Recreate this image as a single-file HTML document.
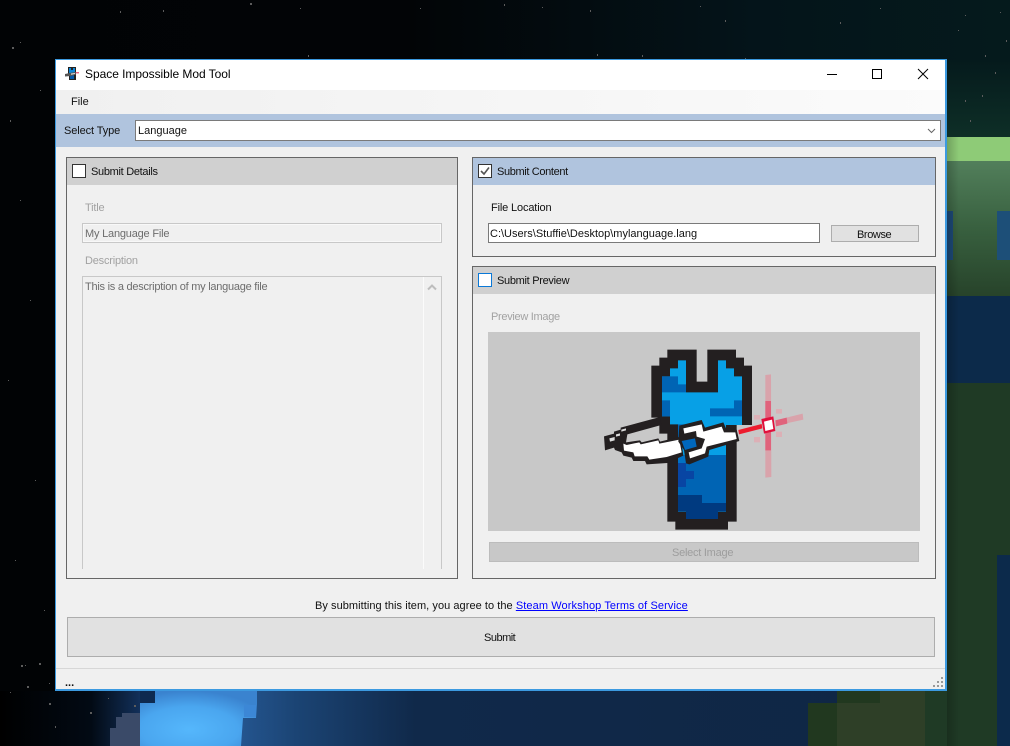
<!DOCTYPE html>
<html><head><meta charset="utf-8"><style>
html,body{margin:0;padding:0;width:1010px;height:746px;overflow:hidden;background:#000}
div,a,span{position:absolute;box-sizing:border-box}
.t{font:11px/14px "Liberation Sans",sans-serif;color:#111;white-space:nowrap}
.g{color:#a2a2a2}
.cb{width:14px;height:14px;background:#fff;border:1px solid #333}
.panel{border:1px solid #666;background:#f0f0f0}
.hd{left:0;top:0;right:0;height:27px;background:#d0d0d0}
.btn{background:#e1e1e1;border:1px solid #adadad}
svg{position:absolute;left:0;top:0}
</style></head><body>
<svg width="1010" height="746" viewBox="0 0 1010 746">
<defs>
<linearGradient id="top" x1="0" x2="1" y1="0" y2="0"><stop offset="0" stop-color="#010305"/><stop offset=".4" stop-color="#020406"/><stop offset=".75" stop-color="#04141a"/><stop offset="1" stop-color="#051a1c"/></linearGradient>
<linearGradient id="r0" x1="0" x2="0" y1="0" y2="1"><stop offset="0" stop-color="#051a1c"/><stop offset="1" stop-color="#0e2f27"/></linearGradient>
<linearGradient id="r1" x1="0" x2="0" y1="0" y2="1"><stop offset="0" stop-color="#527f5b"/><stop offset=".5" stop-color="#38603f"/><stop offset="1" stop-color="#27432a"/></linearGradient>
<linearGradient id="nav" x1="0" x2="1" y1="0" y2="0"><stop offset="0" stop-color="#24558f"/><stop offset=".08" stop-color="#1b4474"/><stop offset=".25" stop-color="#10294a"/><stop offset="1" stop-color="#0f2644"/></linearGradient>
<radialGradient id="lb" cx=".42" cy=".7" r=".7"><stop offset="0" stop-color="#55b7fc"/><stop offset=".6" stop-color="#4aa6ef"/><stop offset="1" stop-color="#3a83cf"/></radialGradient>
<linearGradient id="lft" x1="0" x2="1" y1="0" y2="0"><stop offset="0" stop-color="#000"/><stop offset=".65" stop-color="#020a14"/><stop offset="1" stop-color="#12305a"/></linearGradient>
<linearGradient id="sh" x1="0" x2="1" y1="0" y2="0"><stop offset="0" stop-color="#000" stop-opacity=".2"/><stop offset="1" stop-color="#000" stop-opacity="0"/></linearGradient>
<symbol id="sp" viewBox="0 0 690 600">
<path fill="#d9a3ab" d="M526 120l17-2 1 308-18 2zM556 256l82-20 2 18-82 18z"/>
<path fill="#e0637c" d="M526 198h17v148h-17zM556 256l34-8 2 18-34 8z"/>
<path fill="#dcb0b6" d="M492 240h18v14h-18zM558 222h18v14h-18zM492 306h18v16h-18zM558 290h18v16h-18z"/>
<path fill="#231f20" d="M232 44H320V140H352V44H438V68H462V92H486V270H440V560H414V584H256V560H232V296H208V248H184V92H208V68H232Z"/>
<path fill="#07a0e6" d="M216 124H240V100H264V76H288V172H384V76H408V100H432V124H456V270H408V530H264V268H240V244H216Z"/>
<path fill="#0064b4" d="M216 124H264V148H288V172H216ZM216 196H240V244H216ZM432 196H456V244H360V220H432ZM264 268H300V320H264ZM264 360H408V530H264Z"/>
<path fill="#0071c4" d="M264 360H288V384H264Z"/>
<path fill="#0845a3" d="M264 384H288V408H312V432H288V456H264Z"/>
<path fill="#003a80" d="M264 480H336V504H408V528H384V552H288V528H264Z"/>
<path fill="#231f20" d="M42 304L72 296V290L92 284V278L210 246L214 270L112 298L108 322L150 316L155 322L205 310L210 320L272 305L280 362L232 384L170 388L165 378L130 378L125 368L100 362L95 352L75 345L72 338L45 346Z"/>
<path fill="#fff" d="M100 326L110 330L148 322L152 328L205 316L208 326L268 314L275 352L230 366L178 374L172 364L134 364L130 352L102 347Z"/>
<path fill="#ddd" d="M58 310L74 306V316L60 320ZM78 298L90 295V302L78 305ZM94 284L108 280V286L94 290Z"/>
<path fill="#231f20" d="M268 272L335 255L345 278L400 262L408 280L440 284L448 318L358 345L355 365L298 388L288 385L282 345L265 320Z"/>
<path fill="#fff" d="M280 280L335 268L340 290L395 275L402 292L436 292L440 312L350 335L345 355L300 370L296 352L335 340L345 312L320 305L318 288L283 296Z"/>
<path fill="#0067bc" d="M275 318L315 310L320 335L285 345Z"/>
<path fill="#ed1c2e" d="M445 285L515 267L517 280L447 298Z"/>
<path fill="#e0103c" d="M514 252L550 244L556 288L522 296Z"/>
<path fill="#fff" d="M522 260L546 254L550 282L526 288Z"/>
</symbol>
</defs>
<rect width="1010" height="746" fill="url(#top)"/>
<rect x="947" y="60" width="63" height="78" fill="url(#r0)"/>
<rect x="947" y="137" width="63" height="27" fill="#8ecb77"/>
<rect x="947" y="161" width="63" height="135" fill="url(#r1)"/>
<rect x="947" y="211" width="6" height="49" fill="#1d4a78"/>
<rect x="997" y="211" width="13" height="49" fill="#1d4f78"/>
<rect x="947" y="296" width="63" height="87" fill="#0c2a4a"/>
<rect x="947" y="383" width="63" height="363" fill="#1f3a25"/>
<rect x="997" y="555" width="13" height="191" fill="#0c2a4b"/>
<rect x="0" y="691" width="140" height="55" fill="url(#lft)"/>
<path fill="#3a4a68" d="M110 746V728H116V717H122V713H140V746Z"/>
<rect x="140" y="691" width="15" height="12" fill="#0e2a50"/>
<rect x="240" y="691" width="700" height="55" fill="url(#nav)"/>
<path fill="url(#lb)" d="M155 691H257V704L256 718H243L241 746H140V703H155Z"/>
<path fill="#3c87d6" d="M244 705H256V717H244Z"/>
<rect x="808" y="703" width="202" height="43" fill="#21381f"/>
<rect x="837" y="691" width="130" height="12" fill="#21381f"/>
<rect x="880" y="691" width="45" height="12" fill="#2e3f27"/>
<rect x="837" y="703" width="88" height="43" fill="#2e3f27"/>
<rect x="925" y="691" width="85" height="55" fill="#1f3a25"/>
<rect x="997" y="691" width="13" height="55" fill="#0c2a4b"/>
<rect x="947" y="137" width="12" height="609" fill="url(#sh)"/>
<path fill="#5c5c5c" d="M12 47h2v2h-2zM120 11h1v2h-1zM163 10h1v2h-1zM250 3h2v2h-2zM172 63h1v2h-1zM308 55h1v2h-1zM300 8h1v1h-1zM332 66h1v1h-1zM420 8h1v1h-1zM504 4h1v2h-1zM542 7h1v1h-1zM590 10h1v2h-1zM597 54h1v2h-1zM642 55h1v2h-1zM745 58h1v2h-1zM725 20h1v2h-1zM840 22h1v2h-1zM880 8h1v1h-1zM930 85h1v1h-1zM965 15h1v1h-1zM985 55h1v2h-1zM965 100h1v2h-1zM982 95h1v2h-1zM995 72h1v2h-1zM970 120h1v2h-1zM20 42h1v1h-1zM10 120h1v2h-1zM30 300h1v1h-1zM20 200h1v1h-1zM40 90h1v1h-1zM8 380h1v1h-1zM35 480h1v1h-1zM15 560h1v1h-1zM44 610h1v1h-1zM25 665h1v1h-1zM10 692h1v1h-1zM21 665h2v2h-2zM39 663h2v2h-2zM27 686h2v2h-2zM49 703h2v2h-2zM89 688h1v2h-1zM134 705h2v2h-2zM90 712h2v2h-2zM55 726h1v2h-1zM49 683h1v1h-1zM108 698h1v1h-1zM112 683h1v1h-1zM1000 12h1v1h-1zM958 30h1v1h-1zM700 6h1v1h-1zM1006 40h1v2h-1z"/>
</svg>

<div style="left:55px;top:59px;width:892px;height:632px;background:#f0f0f0;border:1px solid #3c9ae0;border-width:1px 2px 2px 1px"></div>
<div style="left:56px;top:60px;width:889px;height:30px;background:#fff"></div>
<svg style="left:64px;top:66px" width="16" height="16" viewBox="0 0 16 16">
<path fill="#222" d="M4 1H12V14H5V10H4Z"/>
<path fill="#0a86d8" d="M5 2H7V4H9V2H11V7H10V13H6V7H5Z"/>
<path fill="#0458a8" d="M6 9H10V13H6Z"/>
<path fill="#555" d="M1 8L8 6.500L12 6V8.500L7 10L1 10.500Z"/>
<path fill="#ddd" d="M7 7.500L11 7V8L7 8.800Z"/>
<path fill="#e8204a" d="M12 6.300H15V7.300H12Z"/>
</svg>
<div class="t" style="left:85px;top:67px;font-size:12px;color:#000;letter-spacing:-.04px">Space Impossible Mod Tool</div>
<svg style="left:820px;top:62px" width="120" height="24" viewBox="820 62 120 24"><path d="M827 74.500h10" stroke="#000" stroke-width="1"/><rect x="872.500" y="69.500" width="9" height="9" fill="none" stroke="#000"/><path d="M918 69l10 10M928 69l-10 10" stroke="#000" stroke-width="1"/></svg>

<div style="left:56px;top:90px;width:889px;height:24px;background:linear-gradient(90deg,#f0f0f0,#fbfbfb)"></div>
<div class="t" style="left:71px;top:95px;color:#111">File</div>

<div style="left:56px;top:114px;width:889px;height:33px;background:#b0c4de"></div>
<div class="t" style="left:64px;top:124px;letter-spacing:-.1px">Select Type</div>
<div style="left:135px;top:120px;width:806px;height:21px;background:#fff;border:1px solid #7a7a7a"></div>
<div class="t" style="left:138px;top:124px">Language</div>
<svg style="left:925px;top:126px" width="12" height="8"><path d="M3 3l3.500 3.500L10 3" fill="none" stroke="#666" stroke-width="1"/></svg>

<div class="panel" style="left:66px;top:157px;width:392px;height:422px"><div class="hd"></div></div>
<div class="cb" style="left:72px;top:164px"></div>
<div class="t" style="left:91px;top:165px;letter-spacing:-.3px">Submit Details</div>
<div class="t g" style="left:85px;top:201px;letter-spacing:-.2px">Title</div>
<div style="left:82px;top:223px;width:360px;height:20px;border:1px solid #c8c8c8;background:#f0f0f0;box-shadow:inset 0 0 0 1px #f8f8f8"></div>
<div class="t" style="left:85px;top:227px;color:#6d6d6d;letter-spacing:-.2px">My Language File</div>
<div class="t g" style="left:85px;top:254px;letter-spacing:-.2px">Description</div>
<div style="left:82px;top:276px;width:360px;height:293px;border:1px solid #c8c8c8;border-bottom:0;background:#f0f0f0"></div>
<div style="left:423px;top:277px;width:1px;height:292px;background:#fbfbfb"></div>
<div class="t" style="left:85px;top:280px;color:#6d6d6d;letter-spacing:-.25px">This is a description of my language file</div>
<svg style="left:426px;top:282px" width="12" height="10"><path d="M2 7.500l4-4 4 4" fill="none" stroke="#bdbdbd" stroke-width="2"/></svg>

<div class="panel" style="left:472px;top:157px;width:464px;height:100px"><div class="hd" style="background:#b0c4de"></div></div>
<div class="cb" style="left:478px;top:164px"></div>
<svg style="left:478px;top:164px" width="14" height="14"><path d="M3 7l3 3 5-6.500" fill="none" stroke="#555" stroke-width="1.600"/></svg>
<div class="t" style="left:497px;top:165px;letter-spacing:-.36px">Submit Content</div>
<div class="t" style="left:491px;top:201px;letter-spacing:-.15px">File Location</div>
<div style="left:488px;top:223px;width:332px;height:20px;background:#fff;border:1px solid #7a7a7a"></div>
<div class="t" style="left:490px;top:227px">C:\Users\Stuffie\Desktop\mylanguage.lang</div>
<div class="btn" style="left:831px;top:225px;width:88px;height:17px"></div>
<div class="t" style="left:857px;top:228px;letter-spacing:-.4px">Browse</div>

<div class="panel" style="left:472px;top:266px;width:464px;height:313px"><div class="hd"></div></div>
<div class="cb" style="left:478px;top:273px;border-color:#0a78d7"></div>
<div class="t" style="left:497px;top:274px;letter-spacing:-.3px">Submit Preview</div>
<div class="t g" style="left:491px;top:310px;letter-spacing:-.3px">Preview Image</div>
<div style="left:488px;top:332px;width:432px;height:199px;background:#c8c8c8"></div>
<svg style="left:590px;top:335px" width="230" height="200"><use href="#sp" width="230" height="200"/></svg>
<div style="left:489px;top:542px;width:430px;height:20px;background:#c8c8c8;border:1px solid #bcbcbc"></div>
<div class="t" style="left:672px;top:546px;color:#9d9d9d;letter-spacing:-.25px">Select Image</div>

<div class="t" style="left:315px;top:599px;letter-spacing:.05px">By submitting this item, you agree to the <a href="#" style="position:static;color:#00f;text-decoration:underline;letter-spacing:.1px">Steam Workshop Terms of Service</a></div>
<div class="btn" style="left:67px;top:617px;width:868px;height:40px"></div>
<div class="t" style="left:484px;top:631px;letter-spacing:-.5px">Submit</div>
<div style="left:56px;top:668px;width:889px;height:1px;background:#d7d7d7"></div>
<div class="t" style="left:65px;top:676px;font-weight:bold">...</div>
<svg style="left:930px;top:675px" width="15" height="14" viewBox="930 675 15 14"><path fill="#999" d="M941 677h2v2h-2zM937 681h2v2h-2zM941 681h2v2h-2zM933 685h2v2h-2zM937 685h2v2h-2zM941 685h2v2h-2z"/></svg>
</body></html>
